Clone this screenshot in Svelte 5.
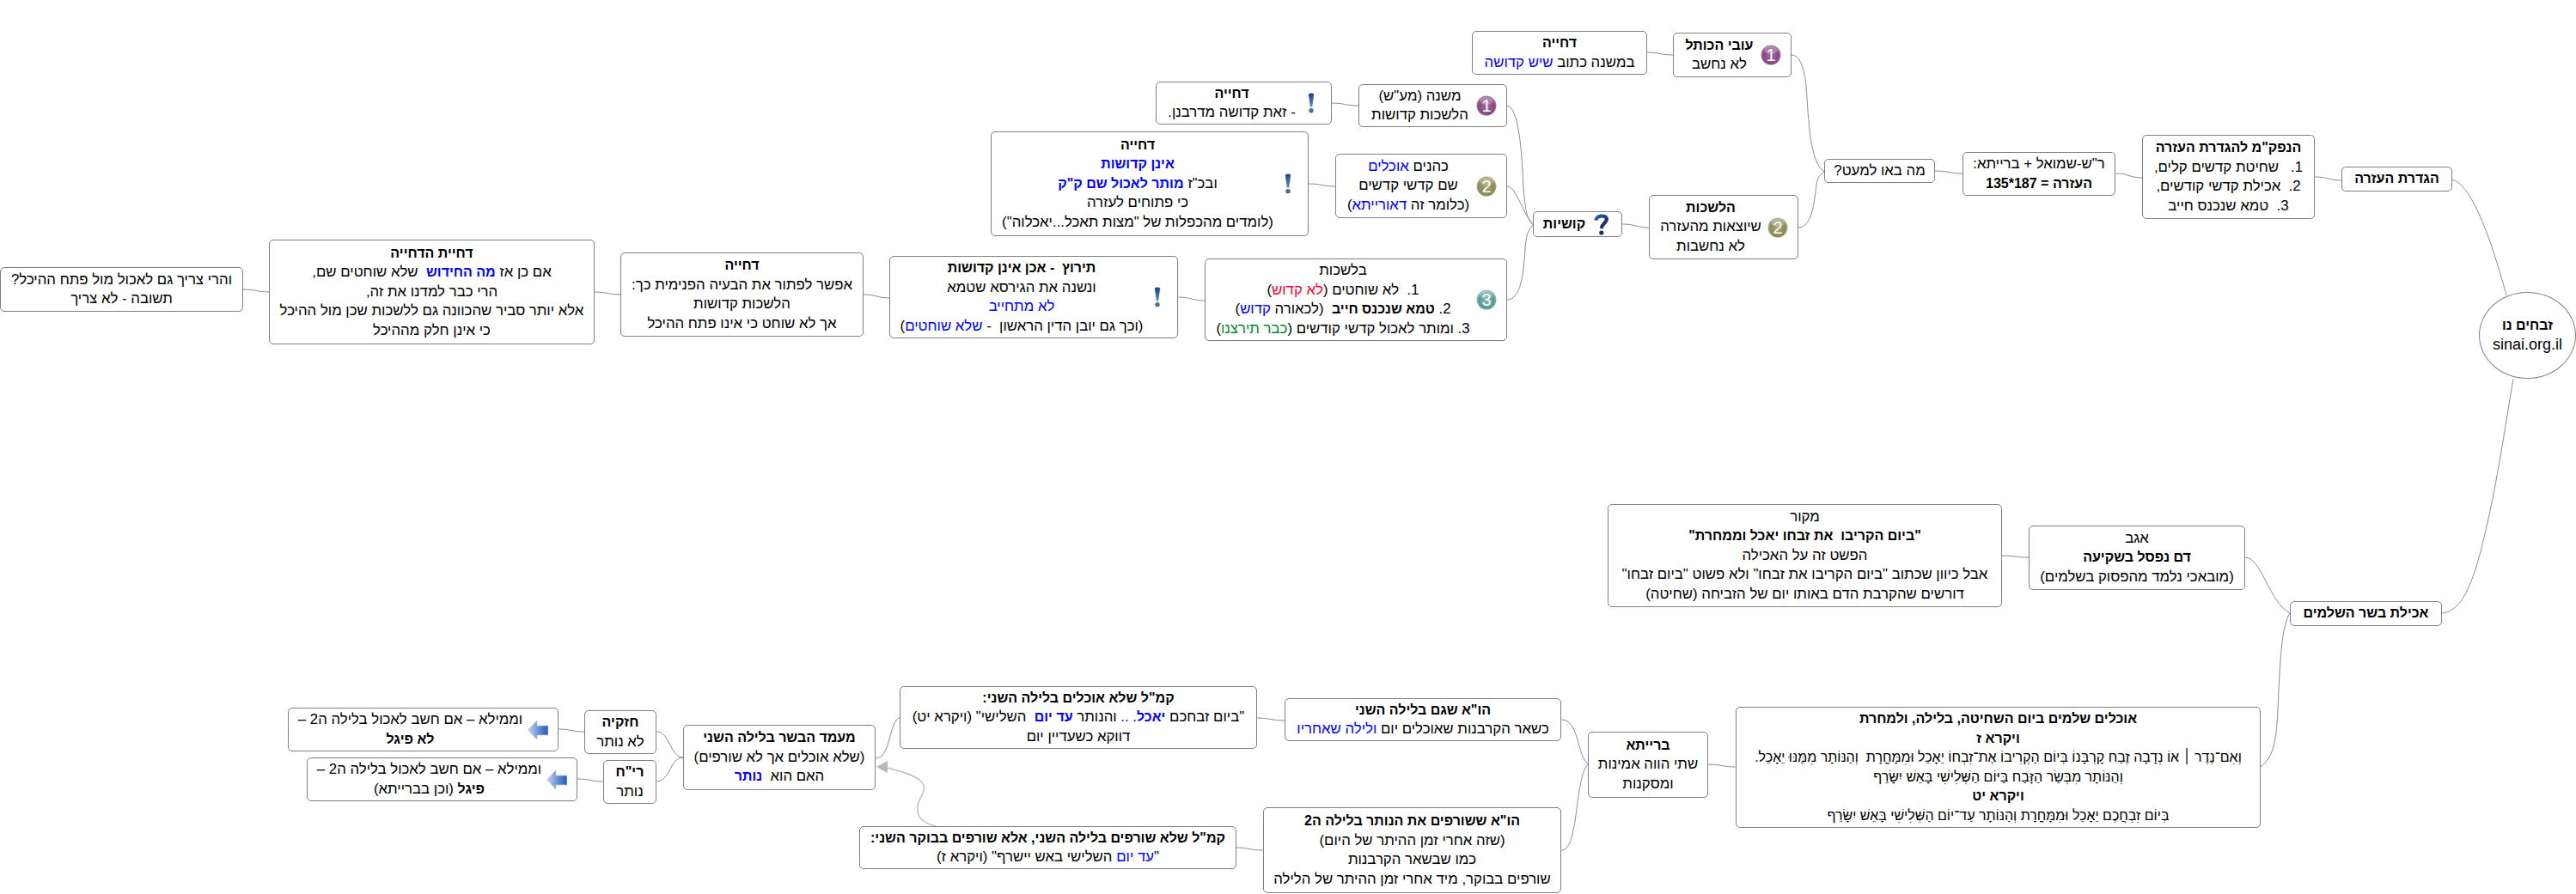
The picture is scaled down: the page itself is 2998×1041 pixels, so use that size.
<script>
  const nodes = [
    { x: 2885, y: 340, w: 113, h: 101, round: true, lines: [[['זבחים נו', 'b']], [['sinai.org.il', 'lat']]] },
    { x: 2725, y: 194, w: 129, h: 29, lines: [[['הגדרת העזרה', 'b']]] },
    { x: 2493, y: 157, w: 201, h: 98, lines: [[['הנפק"מ להגדרת העזרה', 'b']], '1.   שחיטת קדשים קלים,', '2.  אכילת קדשי קודשים,', '3.  טמא שנכנס חייב'] },
    { x: 2284, y: 177, w: 178, h: 51, lines: ['ר"ש-שמואל + ברייתא:', [['העזרה = 187*135', 'b']]] },
    { x: 2123, y: 185, w: 129, h: 28, lines: ['מה באו למעט?'] },
    { x: 1947, y: 38, w: 138, h: 52, icon: 'one', lines: [[['עובי הכותל', 'b']], 'לא נחשב'] },
    { x: 1713, y: 36, w: 204, h: 51, lines: [[['דחייה', 'b']], ['במשנה כתוב ', ['שיש קדושה', 'blue']]] },
    { x: 1919, y: 227, w: 174, h: 75, icon: 'two', lines: [[['הלשכות', 'b']], 'שיוצאות מהעזרה', 'לא נחשבות'] },
    { x: 1784, y: 246, w: 104, h: 30, icon: 'question', lines: [[['קושיות', 'b']]] },
    { x: 1581, y: 98, w: 173, h: 50, icon: 'one', lines: ['משנה (מע"ש)', 'הלשכות קדושות'] },
    { x: 1345, y: 95, w: 205, h: 50, icon: 'bang', lines: [[['דחייה', 'b']], '- זאת קדושה מדרבנן.'] },
    { x: 1554, y: 179, w: 200, h: 75, icon: 'two', lines: [['כהנים ', ['אוכלים', 'blue']], 'שם קדשי קדשים', ['(כלומר זה ', ['דאורייתא', 'blue'], ')']] },
    { x: 1153, y: 153, w: 370, h: 122, icon: 'bang', lines: [[['דחייה', 'b']], [['אינן קדושות', 'bb']], ['ובכ"ז ', ['מותר לאכול שם ק"ק', 'bb']], 'כי פתוחים לעזרה', '(לומדים מהכפלות של "מצות תאכל...יאכלוה")'] },
    { x: 1402, y: 301, w: 352, h: 96, icon: 'three', lines: ['בלשכות', ['1.  לא שוחטים (', ['לא קדוש', 'red'], ')'], ['2. ', ['טמא שנכנס חייב', 'b'], '  (לכאורה ', ['קדוש', 'blue'], ')'], ['3. ומותר לאכול קדשי קודשים (', ['כבר תירצנו', 'green'], ')']] },
    { x: 1035, y: 298, w: 336, h: 96, icon: 'bang', lines: [[['תירוץ  - אכן אינן קדושות', 'b']], 'ונשנה את הגירסא שטמא', [['לא מתחייב', 'blue']], ['(וכך גם יובן הדין הראשון  - ', ['שלא שוחטים', 'blue'], ')']] },
    { x: 722, y: 294, w: 283, h: 98, lines: [[['דחייה', 'b']], 'אפשר לפתור את הבעיה הפנימית כך:', 'הלשכות קדושות', 'אך לא שוחט כי אינו פתח ההיכל'] },
    { x: 313, y: 279, w: 379, h: 122, lines: [[['דחיית הדחייה', 'b']], ['אם כן אז ', ['מה החידוש', 'bb'], '  שלא שוחטים שם,'], 'הרי כבר למדנו את זה,', 'אלא יותר סביר שהכוונה גם ללשכות שכן מול ההיכל', 'כי אינן חלק מההיכל'] },
    { x: 0, y: 311, w: 283, h: 52, lines: ['והרי צריך גם לאכול מול פתח ההיכל?', 'תשובה - לא צריך'] },
    { x: 2665, y: 700, w: 177, h: 29, lines: [[['אכילת בשר השלמים', 'b']]] },
    { x: 2361, y: 612, w: 252, h: 75, lines: ['אגב', [['דם נפסל בשקיעה', 'b']], '(מובאכי נלמד מהפסוק בשלמים)'] },
    { x: 1871, y: 587, w: 459, h: 120, lines: ['מקור', [['"ביום הקריבו  את זבחו יאכל וממחרת"', 'b']], 'הפשט זה על האכילה', 'אבל כיוון שכתוב "ביום הקריבו את זבחו" ולא פשוט "ביום זבחו"', 'דורשים שהקרבת הדם באותו יום של הזביחה (שחיטה)'] },
    { x: 2020, y: 823, w: 611, h: 141, lines: [[['אוכלים שלמים ביום השחיטה, בלילה, ולמחרת', 'b']], [['ויקרא ז', 'b']], [['וְאִם־נֶדֶר ׀ אוֹ נְדָבָה זֶבַח קָרְבָּנוֹ בְּיוֹם הַקְרִיבוֹ אֶת־זִבְחוֹ יֵאָכֵל וּמִמָּחֳרָת  וְהַנּוֹתָר מִמֶּנּוּ יֵאָכֵל.', 'v']], [['וְהַנּוֹתָר מִבְּשַׂר הַזָּבַח בַּיּוֹם הַשְּׁלִישִׁי בָּאֵשׁ יִשָּׂרֵף', 'v']], [['ויקרא יט', 'b']], [['בְּיוֹם זִבְחֲכֶם יֵאָכֵל וּמִמָּחֳרָת וְהַנּוֹתָר עַד־יוֹם הַשְּׁלִישִׁי בָּאֵשׁ יִשָּׂרֵף', 'v']]] },
    { x: 1848, y: 852, w: 140, h: 77, lines: [[['ברייתא', 'b']], 'שתי הווה אמינות', 'ומסקנות'] },
    { x: 1495, y: 813, w: 322, h: 50, lines: [[['הו"א שגם בלילה השני', 'b']], ['כשאר הקרבנות שאוכלים יום ', ['ולילה שאחריו', 'blue']]] },
    { x: 1047, y: 799, w: 416, h: 73, lines: [[['קמ"ל שלא אוכלים בלילה השני:', 'b']], ['"ביום זבחכם ', ['יאכל', 'bb'], ['. ..', 'blue'], ' והנותר ', ['עד יום', 'bb'], '  השלישי" (ויקרא יט)'], 'דווקא כשעדיין יום'] },
    { x: 1470, y: 940, w: 347, h: 100, lines: [[['הו"א ששורפים את הנותר בלילה ה2', 'b']], '(שזה אחרי זמן ההיתר של היום)', 'כמו שבשאר הקרבנות', 'שורפים בבוקר, מיד אחרי זמן ההיתר של הלילה'] },
    { x: 1000, y: 962, w: 439, h: 50, lines: [[['קמ"ל שלא שורפים בלילה השני, אלא שורפים בבוקר השני:', 'b']], ['"', ['עד יום', 'blue'], ' השלישי באש יישרף" (ויקרא ז)']] },
    { x: 795, y: 844, w: 224, h: 76, lines: [[['מעמד הבשר בלילה השני', 'b']], '(שלא אוכלים אך לא שורפים)', ['האם הוא  ', ['נותר', 'bb']]] },
    { x: 680, y: 827, w: 84, h: 51, lines: [[['חזקיה', 'b']], 'לא נותר'] },
    { x: 702, y: 885, w: 62, h: 51, lines: [[['רי"ח', 'b']], 'נותר'] },
    { x: 335, y: 824, w: 315, h: 51, icon: 'arrow', lines: ['וממילא – אם חשב לאכול בלילה ה2 –', [['לא פיגל', 'b']]] },
    { x: 357, y: 882, w: 315, h: 51, icon: 'arrow', lines: ['וממילא – אם חשב לאכול בלילה ה2 –', [['פיגל', 'b'], ' (וכן בברייתא)']] }
  ];

  const short = (a, b, c, d) => {
    const m = (a + c) / 2;
    return `M${a} ${b} C${m} ${b} ${m} ${d} ${c} ${d}`;
  };

  const edges = [
    short(2725, 210, 2694.5, 206),
    short(2493.5, 207, 2462.5, 202),
    short(2284, 202, 2252, 199),
    short(1947.5, 64, 1916.5, 61),
    short(1919, 265, 1888.5, 261),
    short(1581, 123, 1550, 120),
    short(1554, 217, 1523, 214),
    short(1402, 350, 1371.4, 346),
    short(1035.7, 347, 1004.6, 343),
    short(722.4, 343, 692, 340),
    short(313.4, 340, 283, 337),
    short(2361, 649, 2329.6, 647),
    short(2019.6, 893, 1988.4, 890),
    short(1495, 839, 1463, 836),
    short(1469.6, 990, 1438.6, 987),
    short(680.4, 852, 649.7, 849),
    short(702.5, 910, 671.7, 907),
    short(795, 882, 764.4, 852),
    short(795, 882, 764.4, 910),
    'M1753.5 123 C1765 123 1770 160 1772 200 C1774 240 1776 255 1784.5 262',
    'M1753.5 217 C1765 217 1770 245 1784.5 262',
    'M1753.5 349 C1770 349 1773 320 1775 290 C1776 275 1778 268 1784.5 262',
    'M2085 64 C2095 64 2100 80 2102 100 C2105 140 2106 190 2123.5 200',
    'M2093 265 C2110 265 2112 230 2114 215 C2115 207 2118 203 2123.5 200',
    'M2853.7 209 C2880 215 2905 300 2917 344',
    'M2925 441 C2915 500 2905 570 2890 630 C2878 680 2865 712 2842 714',
    'M2612.8 649 C2632 649 2640 700 2665 714',
    'M2665 714 C2655 730 2654 770 2652 803 C2650 850 2650 880 2630.6 893',
    'M1817.4 838 C1838 838 1835 880 1848.4 890',
    'M1817.4 990 C1838 990 1832 905 1848.4 890',
    'M1047.6 836 C1035 836 1037 883 1019.5 883'
  ];

  const markers = { one: ['1', 'm1'], two: ['2', 'm2'], three: ['3', 'm3'] };
  const segs = (line) => (typeof line === 'string' ? [line] : line);
</script>

<div class="map" dir="rtl">
  <svg class="links" width="2998" height="1041" viewBox="0 0 2998 1041">
    {#each edges as d}
      <path class="edge" {d} />
    {/each}
    <path class="rel" d="M1089 962 C1072 958 1066 950 1068 938 C1071 925 1082 918 1070 908 C1060 901 1048 898 1032 894" />
    <polygon class="relhead" points="1020,893 1033,886 1033,900" />
  </svg>

  {#each nodes as n}
    <div class="node" class:round={n.round} style="left:{n.x}px;top:{n.y}px;width:{n.w}px;height:{n.h}px">
      {#if n.icon && markers[n.icon]}
        <svg class="marker" width="24" height="24" viewBox="0 0 24 24">
          <circle cx="12" cy="12" r="11.5" fill="url(#{markers[n.icon][1]})" />
          <ellipse cx="12" cy="6.5" rx="7.5" ry="4.5" fill="#fff" opacity="0.28" />
          <text x="12" y="19" text-anchor="middle" class="mnum">{markers[n.icon][0]}</text>
        </svg>
      {:else if n.icon === 'bang'}
        <svg class="bang" width="8" height="24" viewBox="0 0 8 24">
          <path d="M0.8 1.6 Q4 -0.8 7.2 1.6 L5.2 16.5 H2.8 Z" fill="url(#bangFill)" />
          <circle cx="4" cy="20.8" r="2.7" fill="#4f7192" />
        </svg>
      {:else if n.icon === 'question'}
        <svg class="quest" width="18" height="25" viewBox="0 0 18 25">
          <path d="M2.6 7.6 C2.2 2.2 13.4 0.4 14.8 5.6 C15.8 10 9.4 10.8 8.8 17" fill="none" stroke="url(#questFill)" stroke-width="4.2" />
          <circle cx="8.8" cy="22" r="2.6" fill="#1c2f6e" />
        </svg>
      {:else if n.icon === 'arrow'}
        <svg class="arrowico" width="24" height="24" viewBox="0 0 24 24">
          <path d="M0.5 12 L11 1 V7 H24 V18 H11 V23 Z" fill="url(#arrowFill)" stroke="#b9c8e6" stroke-width="0.8" />
        </svg>
      {/if}
      <div class="body">
        {#each n.lines as line}
          <div class="line">{#each segs(line) as s}{#if typeof s === 'string'}{s}{:else}<span class={s[1]}>{s[0]}</span>{/if}{/each}</div>
        {/each}
      </div>
    </div>
  {/each}

  <svg class="defs" width="0" height="0">
    <defs>
      <radialGradient id="m1" cx="0.5" cy="0.55" r="0.55">
        <stop offset="0" stop-color="#a56ca0" /><stop offset="0.7" stop-color="#87487f" /><stop offset="1" stop-color="#b28bae" />
      </radialGradient>
      <radialGradient id="m2" cx="0.5" cy="0.55" r="0.55">
        <stop offset="0" stop-color="#a8a578" /><stop offset="0.7" stop-color="#8c8a5a" /><stop offset="1" stop-color="#bdbb9a" />
      </radialGradient>
      <radialGradient id="m3" cx="0.5" cy="0.55" r="0.55">
        <stop offset="0" stop-color="#7fb5b5" /><stop offset="0.7" stop-color="#5b9999" /><stop offset="1" stop-color="#a8cccc" />
      </radialGradient>
      <linearGradient id="bangFill" x1="0" y1="0" x2="0" y2="1">
        <stop offset="0" stop-color="#17408f" /><stop offset="1" stop-color="#6f90a6" />
      </linearGradient>
      <linearGradient id="questFill" x1="0" y1="0" x2="1" y2="1">
        <stop offset="0" stop-color="#2e5ba8" /><stop offset="1" stop-color="#141f5a" />
      </linearGradient>
      <linearGradient id="arrowFill" x1="0" y1="0" x2="1" y2="0">
        <stop offset="0" stop-color="#c3d4f0" /><stop offset="1" stop-color="#1f56b8" />
      </linearGradient>
    </defs>
  </svg>
</div>

<style>
  :global(body) { margin: 0; background: #fff; }
  .map {
    position: relative;
    width: 2998px;
    height: 1041px;
    overflow: hidden;
    background: #fff;
    font-family: "Liberation Sans", Arial, sans-serif;
    font-size: 16.8px;
    line-height: 22.5px;
    color: #000;
  }
  .links { position: absolute; left: 0; top: 0; }
  .defs { position: absolute; }
  .edge { fill: none; stroke: #8c8c8c; stroke-width: 1; }
  .rel { fill: none; stroke: #c0c0c0; stroke-width: 1.6; }
  .relhead { fill: #b8b8b8; }
  .node {
    position: absolute;
    box-sizing: border-box;
    display: flex;
    align-items: center;
    justify-content: center;
    gap: 6px;
    padding: 0 11px;
    background: #fff;
    border: 1px solid #808080;
    border-radius: 5px;
  }
  .round { border-radius: 50%; padding: 0; }
  .body { flex: 1 1 auto; text-align: center; }
  .line { white-space: pre; }
  .marker, .bang, .quest, .arrowico { flex: none; display: block; }
  .bang { margin-inline: 8px 6px; }
  .quest { margin-inline: 3px 4px; }
  .mnum { fill: #fff; font-size: 20px; font-family: "Liberation Sans", Arial, sans-serif; }
  .b { font-weight: 700; font-size: 16px; }
  .blue { color: #0000ff; }
  .bb { color: #0000ff; font-weight: 700; font-size: 16px; }
  .red { color: #ff0033; }
  .green { color: #008a2e; }
  .v { font-size: 16px; }
  .lat { font-size: 18px; }
</style>
